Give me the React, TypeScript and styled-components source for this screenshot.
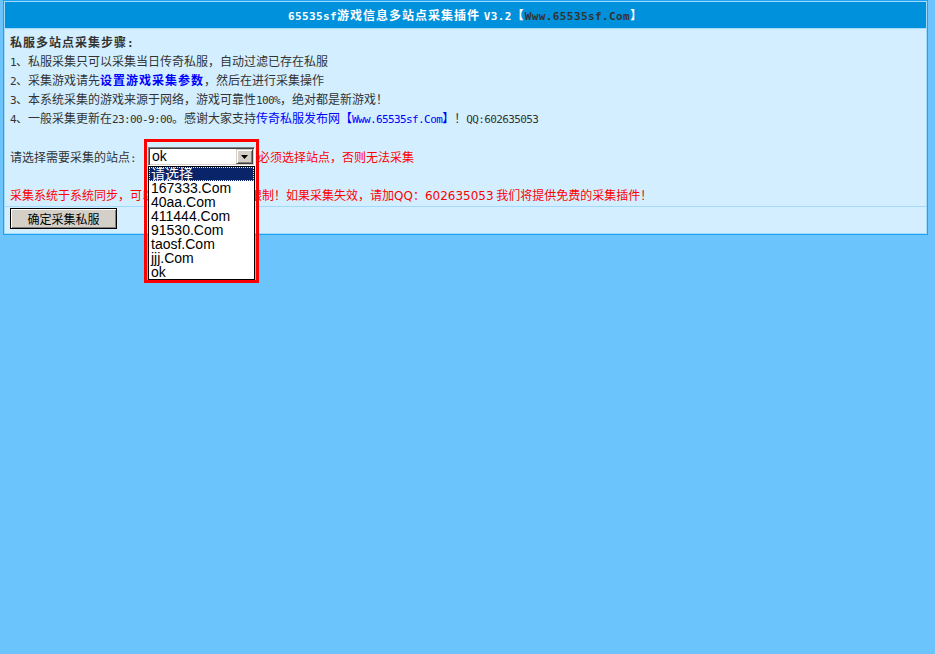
import React from "react";
import styled, { createGlobalStyle } from "styled-components";

const GlobalStyle = createGlobalStyle`
  html {
    background: #6cc4fc;
  }
  html, body {
    margin: 0;
    padding: 0;
  }
  body {
    min-height: 100vh;
    font-family: "Noto Sans CJK SC", sans-serif;
    font-size: 12px;
    color: #333;
  }
  #root {
    min-height: 100vh;
  }
`;

const Frame = styled.div`
  box-sizing: border-box;
  width: 925px;
  margin-left: 3px;
  padding: 1px;
  border: 1px solid #19a3f0;
  background: #a3dafa;
  display: flex;
  flex-direction: column;
  gap: 1px;
`;

const TitleBar = styled.div`
  height: 26px;
  background: #0091dc;
  color: #fff;
  font-weight: bold;
  letter-spacing: 1px;
  line-height: 26px;
  text-align: center;
  white-space: pre;
`;

const SiteName = styled.span`
  color: #333;
`;

const Body = styled.div`
  box-sizing: border-box;
  height: 177px;
  padding: 3px 5px 2px;
  background: #d3efff;
  line-height: 19px;
`;

const Footer = styled.div`
  box-sizing: border-box;
  height: 26px;
  padding: 1px 5px 0;
  background: #d3efff;
`;

/* half-width latin runs, 6px per char like the old bitmap font */
const Mono = styled.span<{ $bold?: boolean }>`
  font-family: "DejaVu Sans Mono", monospace;
  font-size: 11px;
  line-height: 0;
  letter-spacing: ${(p) => (p.$bold ? "0.38px" : "-0.62px")};
`;

const Heading = styled.div`
  height: 19px;
  font-weight: bold;
  letter-spacing: 1px;
`;

const Step = styled.div`
  height: 19px;
  white-space: pre;
`;

const StrongLink = styled.a`
  color: #0000ff;
  font-weight: bold;
  letter-spacing: 1px;
  text-decoration: none;
`;

const SiteLink = styled.a`
  color: #0000ff;
  text-decoration: none;
`;

const FormRow = styled.div`
  margin-top: 19px;
  height: 20px;
  display: flex;
  align-items: flex-start;
  line-height: 21px;
`;

const Label = styled.span`
  width: 138px;
`;

const Warn = styled.span`
  color: #ff0000;
  margin-left: 3px;
`;

const Combo = styled.div`
  position: relative;
  margin-top: 1px;
  width: 107px;
  height: 19px;
`;

const ComboField = styled.div`
  box-sizing: border-box;
  height: 19px;
  background: #fff;
  border: 1px solid;
  border-color: #808080 #ffffff #ffffff #808080;
  box-shadow: inset 1px 1px #404040, inset -1px -1px #d4d0c8;
  display: flex;
  align-items: center;
  padding: 0 1px 0 3px;
  font-family: "Liberation Sans", sans-serif;
  font-size: 14px;
  color: #000;
`;

const ComboValue = styled.span`
  flex: 1;
  line-height: 15px;
`;

const ArrowButton = styled.span`
  box-sizing: border-box;
  width: 17px;
  height: 15px;
  background: #d4d0c8;
  border: 1px solid;
  border-color: #d4d0c8 #404040 #404040 #d4d0c8;
  box-shadow: inset 1px 1px #fff, inset -1px -1px #808080;
  display: flex;
  align-items: center;
  justify-content: center;
`;

const OptionList = styled.ul`
  position: absolute;
  top: 19px;
  left: 0;
  box-sizing: border-box;
  width: 107px;
  height: 114px;
  margin: 0;
  padding: 0;
  list-style: none;
  background: #fff;
  border: 1px solid #000;
  font-family: "Liberation Sans", "Noto Sans CJK SC", sans-serif;
  font-size: 14px;
  line-height: 14px;
  color: #000;
  z-index: 2;
`;

const Option = styled.li<{ $active?: boolean }>`
  height: 14px;
  padding-left: 2px;
  white-space: nowrap;
  background: ${(p) => (p.$active ? "#0a246a" : "transparent")};
  color: ${(p) => (p.$active ? "#fff" : "#000")};
  outline: ${(p) => (p.$active ? "1px dotted #f4f0b0" : "none")};
  outline-offset: -1px;
`;

const Highlight = styled.div`
  position: absolute;
  left: -4px;
  top: -8px;
  width: 115px;
  height: 144px;
  box-sizing: border-box;
  border: 3px solid #ff0000;
  pointer-events: none;
  z-index: 3;
`;

const Notice = styled.div`
  margin-top: 19px;
  height: 19px;
  color: #ff0000;
  white-space: pre;
`;

const Digits = styled.span`
  font-family: "DejaVu Sans", sans-serif;
  font-size: 12px;
  line-height: 0;
`;

const SubmitButton = styled.button`
  width: 107px;
  height: 21px;
  padding: 0;
  font-family: "Noto Sans CJK SC", sans-serif;
  font-size: 12px;
  color: #000;
  background: #d4d0c8;
  border: 1px solid #000;
  box-shadow: inset 1px 1px #fff, inset -1px -1px #808080;
`;

const SITES = [
  "请选择",
  "167333.Com",
  "40aa.Com",
  "411444.Com",
  "91530.Com",
  "taosf.Com",
  "jjj.Com",
  "ok",
];

const App = () => {
  return (
    <>
      <GlobalStyle />
      <Frame>
        <TitleBar>
          <Mono $bold>65535sf</Mono>游戏信息多站点采集插件 <Mono $bold>V3.2</Mono>【
          <SiteName>
            <Mono $bold>Www.65535sf.Com</Mono>
          </SiteName>
          】
        </TitleBar>
        <Body>
          <Heading>
            私服多站点采集步骤<Mono $bold>:</Mono>
          </Heading>
          <Step>
            <Mono>1</Mono>、私服采集只可以采集当日传奇私服，自动过滤已存在私服
          </Step>
          <Step>
            <Mono>2</Mono>、采集游戏请先<StrongLink href="#">设置游戏采集参数</StrongLink>
            ，然后在进行采集操作
          </Step>
          <Step>
            <Mono>3</Mono>、本系统采集的游戏来源于网络，游戏可靠性<Mono>100%</Mono>
            ，绝对都是新游戏！
          </Step>
          <Step>
            <Mono>4</Mono>、一般采集更新在<Mono>23:00-9:00</Mono>。感谢大家支持
            <SiteLink href="#">
              传奇私服发布网【<Mono>Www.65535sf.Com</Mono>】
            </SiteLink>
            ！<Mono>QQ:602635053</Mono>
          </Step>
          <FormRow>
            <Label>
              请选择需要采集的站点<Mono>:</Mono>
            </Label>
            <Combo>
              <ComboField>
                <ComboValue>ok</ComboValue>
                <ArrowButton>
                  <svg width="7" height="4" viewBox="0 0 7 4">
                    <path d="M0 0h7L3.5 4z" fill="#000" />
                  </svg>
                </ArrowButton>
              </ComboField>
              <OptionList>
                {SITES.map((site, i) => (
                  <Option key={site} $active={i === 0}>
                    {site}
                  </Option>
                ))}
              </OptionList>
              <Highlight />
            </Combo>
            <Warn>必须选择站点，否则无法采集</Warn>
          </FormRow>
          <Notice>
            采集系统于系统同步，可以采集所有站点不受限制！如果采集失效，请加
            <Digits>QQ</Digits>：<Digits>602635053</Digits> 我们将提供免费的采集插件！
          </Notice>
        </Body>
        <Footer>
          <SubmitButton>确定采集私服</SubmitButton>
        </Footer>
      </Frame>
    </>
  );
};

export default App;
